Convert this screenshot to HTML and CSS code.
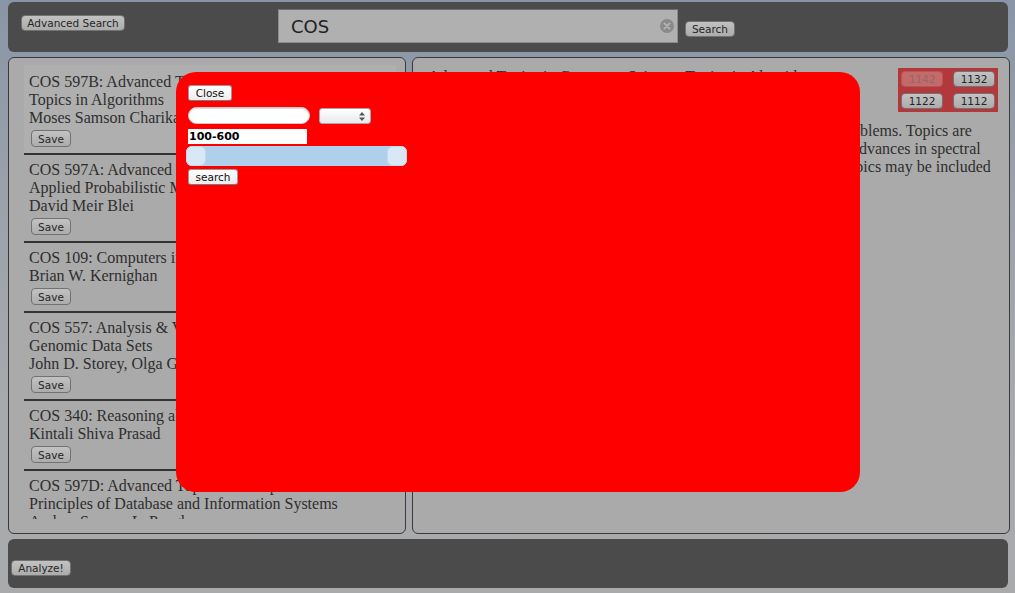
FILE: index.html
```html
<!DOCTYPE html>
<html lang="en">
<head>
<meta charset="utf-8">
<title>Course Search</title>
<link rel="stylesheet" href="styles.css">
</head>
<body>
<div class="page">
  <header class="topbar">
    <button class="btn adv">Advanced Search</button>
    <form class="search">
      <div class="search-field">
        <input class="search-input" type="text" value="COS">
        <svg class="clear" width="14" height="14" viewBox="0 0 14 14"><circle cx="7" cy="7" r="7" fill="#8a8a8a"/><path d="M4.4 4.4 L9.6 9.6 M9.6 4.4 L4.4 9.6" stroke="#b4b4b4" stroke-width="1.8" stroke-linecap="round"/></svg>
      </div>
      <button class="btn search-btn" type="button">Search</button>
    </form>
  </header>

  <main class="panels">
    <section class="panel list-panel">
      <div class="list">
        <div class="item selected">
          <div class="item-title">COS 597B: Advanced Topics in Computer Science: Topics in Algorithms</div>
          <div class="item-prof">Moses Samson Charikar</div>
          <button class="btn save">Save</button>
        </div>
        <div class="item">
          <div class="item-title">COS 597A: Advanced Topics in Computer Science: Applied Probabilistic Modeling</div>
          <div class="item-prof">David Meir Blei</div>
          <button class="btn save">Save</button>
        </div>
        <div class="item">
          <div class="item-title">COS 109: Computers in Our World</div>
          <div class="item-prof">Brian W. Kernighan</div>
          <button class="btn save">Save</button>
        </div>
        <div class="item">
          <div class="item-title">COS 557: Analysis &amp; Visualization of Large-Scale Genomic Data Sets</div>
          <div class="item-prof">John D. Storey, Olga G. Troyanskaya</div>
          <button class="btn save">Save</button>
        </div>
        <div class="item">
          <div class="item-title">COS 340: Reasoning about Computation</div>
          <div class="item-prof">Kintali Shiva Prasad</div>
          <button class="btn save">Save</button>
        </div>
        <div class="item">
          <div class="item-title">COS 597D: Advanced Topics in Computer Science: Principles of Database and Information Systems</div>
          <div class="item-prof">Andrea Soyeon LaPaugh</div>
          <button class="btn save">Save</button>
        </div>
      </div>
    </section>

    <section class="panel detail">
      <div class="detail-head">
        <h2 class="detail-title">Advanced Topics in Computer Science: Topics in Algorithms</h2>
        <div class="terms">
          <button class="btn term" disabled>1142</button>
          <button class="btn term">1132</button>
          <button class="btn term">1122</button>
          <button class="btn term">1112</button>
        </div>
      </div>
      <p class="desc">This course studies developments in algorithms of optimization problems. Topics are<br>likely to include linear and semidefinite programming, and recent advances in spectral<br>graph theory, local algorithms and approximation bounds. Some topics may be included</p>
    </section>
  </main>

  <footer class="bottombar">
    <button class="btn analyze">Analyze!</button>
  </footer>
</div>

<div class="modal">
  <button class="mbtn">Close</button>
  <div class="mrow">
    <input class="pill" type="text">
    <div class="select"><svg width="6" height="9" viewBox="0 0 6 9"><path d="M0 3.5 L3 0 L6 3.5 Z M0 5.5 L3 9 L6 5.5 Z" fill="#555"/></svg></div>
  </div>
  <div class="range-text">100-600</div>
  <div class="slider">
    <span class="handle"></span>
    <span class="handle"></span>
  </div>
  <button class="mbtn msearch">search</button>
</div>
</body>
</html>
```

FILE: styles.css
```css
html, body {
  margin: 0;
  padding: 0;
}
body {
  width: 1015px;
  height: 593px;
  overflow: hidden;
  background: linear-gradient(to bottom, #8995a7 0%, #9ca2ab 35%, #a8a9ac 70%, #a9aaac 100%);
  font-family: "Liberation Serif", serif;
  color: #2e2e2e;
  position: relative;
}
.page {
  box-sizing: border-box;
  height: 593px;
  padding: 2px 7px 0 8px;
  display: flex;
  flex-direction: column;
  gap: 5px;
}
.btn {
  font-family: "DejaVu Sans", sans-serif;
  font-size: 10.5px;
  color: #262626;
  background: linear-gradient(to bottom, #c2c2c2, #acacac);
  border: 1px solid #727272;
  border-radius: 4px;
  height: 16px;
  padding: 0 6px;
  line-height: 14px;
  margin: 0;
}

/* top bar */
.topbar {
  height: 50px;
  flex: none;
  background: #4b4b4b;
  border-radius: 6px;
  display: flex;
  align-items: flex-start;
  padding-left: 13px;
}
.adv {
  margin-top: 13px;
  width: 104px;
  padding: 0;
}
.search {
  margin: 7px 0 0 153px;
  display: flex;
  align-items: flex-start;
  gap: 7px;
}
.search-field {
  position: relative;
  width: 400px;
  height: 34px;
}
.search-input {
  box-sizing: border-box;
  width: 400px;
  height: 34px;
  margin: 0;
  background: #b0b0b0;
  border: 1px solid #8c8c8c;
  border-top-color: #6e6e6e;
  padding: 0 12px;
  font-family: "DejaVu Sans", sans-serif;
  font-size: 18px;
  color: #222;
  outline: none;
}
.clear {
  position: absolute;
  right: 4px;
  top: 10px;
}
.search-btn {
  margin-top: 12px;
  width: 50px;
  padding: 0;
}

/* panels */
.panels {
  height: 477px;
  flex: none;
  display: flex;
  gap: 6px;
  margin-right: -2px;
}
.panel {
  box-sizing: border-box;
  height: 477px;
  background: #aaaaaa;
  border: 1px solid #3a3a3a;
  border-radius: 6px;
  overflow: hidden;
}
.list-panel {
  width: 398px;
  padding: 7px 9px 14px 15px;
}
.list {
  height: 100%;
  overflow: hidden;
}
.item {
  padding: 6px 5px 6px;
  border-bottom: 2px solid #333;
  font-size: 16px;
  line-height: 18px;
}
.item.selected {
  background: #afafaf;
  padding-top: 8px;
}
.save {
  margin: 3px 0 0 2px;
  width: 40px;
  height: 17px;
  padding: 0;
}
.detail {
  width: 598px;
  padding: 10px 11px 0 15px;
}
.detail-head {
  display: flex;
  justify-content: space-between;
  align-items: flex-start;
}
.detail-title {
  margin: 0;
  font-size: 16px;
  line-height: 18px;
  font-weight: normal;
}
.terms {
  display: grid;
  grid-template-columns: 42px 42px;
  gap: 6px 10px;
  padding: 3px;
  background: #b3383b;
}
.term {
  width: 42px;
  padding: 0;
}
.term:disabled {
  background: #c46a6b;
  border-color: #b55556;
  color: #8f6a6a;
}
.desc {
  margin: 10px 0 0;
  font-size: 16px;
  line-height: 18px;
  white-space: nowrap;
}

/* bottom bar */
.bottombar {
  height: 49px;
  flex: none;
  background: #4b4b4b;
  border-radius: 6px;
  padding-left: 3px;
  box-sizing: border-box;
  padding-top: 19px;
}
.analyze {
  width: 60px;
  padding: 0;
}

/* modal */
.modal {
  position: absolute;
  left: 176px;
  top: 72px;
  width: 684px;
  height: 420px;
  box-sizing: border-box;
  padding: 13px 12px;
  background: #ff0000;
  border-radius: 20px;
  display: flex;
  flex-direction: column;
  align-items: flex-start;
}
.mbtn {
  font-family: "DejaVu Sans", sans-serif;
  font-size: 10.5px;
  color: #111;
  background: linear-gradient(to bottom, #ffffff, #ececec);
  border: 1px solid #9a9a9a;
  border-bottom-color: #7a7a7a;
  border-radius: 3px;
  height: 16px;
  width: 44px;
  padding: 0;
  line-height: 14px;
  margin: 0;
}
.mrow {
  display: flex;
  align-items: flex-start;
  gap: 9px;
  margin-top: 6px;
}
.pill {
  box-sizing: border-box;
  width: 122px;
  height: 17px;
  margin: 0;
  border: 1px solid #c9c9c9;
  border-radius: 9px;
  background: #fff;
  box-shadow: inset 0 1px 1px rgba(0,0,0,0.15);
  outline: none;
}
.select {
  box-sizing: border-box;
  width: 52px;
  height: 16px;
  margin-top: 1px;
  border: 1px solid #a8a8a8;
  border-radius: 3px;
  background: linear-gradient(to bottom, #ffffff, #e9e9e9);
  display: flex;
  justify-content: flex-end;
  align-items: center;
  padding-right: 5px;
}
.range-text {
  box-sizing: border-box;
  width: 119px;
  height: 15px;
  margin-top: 5px;
  background: #fff;
  padding-left: 1px;
  font-family: "DejaVu Sans", sans-serif;
  font-weight: bold;
  font-size: 11px;
  line-height: 15px;
  color: #000;
}
.slider {
  box-sizing: border-box;
  width: 221px;
  height: 20px;
  margin: 2px 0 0 -2px;
  background: #afd0ea;
  border-radius: 6px;
  display: flex;
  justify-content: space-between;
  align-items: center;
}
.handle {
  box-sizing: border-box;
  width: 20px;
  height: 20px;
  background: #d9e8f5;
  border: 1px solid #c3d8ec;
  border-radius: 6px;
}
.msearch {
  width: 50px;
  margin-top: 3px;
}
```
